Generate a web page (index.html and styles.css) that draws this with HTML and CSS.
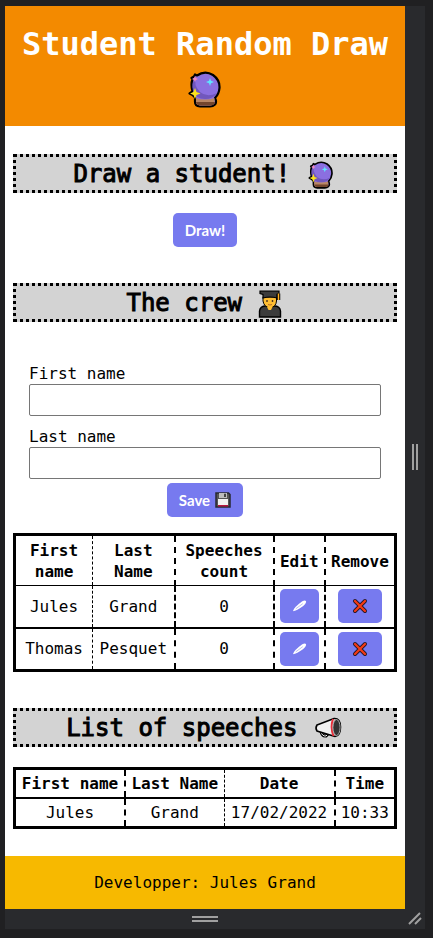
FILE: index.html
```html
<!DOCTYPE html>
<html lang="en">
<head>
<meta charset="utf-8">
<meta name="viewport" content="width=device-width, initial-scale=1">
<title>Student Random Draw</title>
<link rel="stylesheet" href="styles.css">
</head>
<body>
<svg class="sprite" aria-hidden="true">
  <symbol id="ball" viewBox="0 0 34 37">
    <path d="M7 26.500 L4.500 24 1.500 22.500 4.500 20.500 Q2.500 13 4.500 8.500 L3.500 7 6 5.500 7 3.500 9 4.500 Q17 -1 25 4 Q32 9 31.500 17 Q31 23 27 27 Q29 31 27 33.500 Q25 35.500 22 35.500 H12 Q7 35 7 31 Z" fill="#8b6fe0" stroke="#000" stroke-width="2.200" stroke-linejoin="round"/>
    <path d="M8 5 Q3 12 5 20 Q8 28 17 28 Q25 28 29 22 Q19 27 12 21 Q5 14 8 5Z" fill="#7157bd"/>
    <path d="M8 27 Q17 30 26.500 27 V32 Q25 34.500 22 34.500 H12 Q8 34 8 31Z" fill="#b98764"/>
    <path d="M8 31 H27 Q26.500 34.500 22 34.500 H12 Q8 34 8 31Z" fill="#74462d"/>
    <path d="M7 17 L8.500 21 12.500 22.500 8.500 24 7 28 5.500 24 2 22.500 5.500 21Z" fill="#fde31b"/>
    <path d="M22 7 L23 9.800 26 11 23 12.200 22 15 21 12.200 18 11 21 9.800Z" fill="#61e4ff"/>
    <path d="M7 5 L7.800 7 10 8 7.800 9 7 11 6 9 4 8 6 7Z" fill="#ef8ac1"/>
  </symbol>
  <symbol id="student" viewBox="0 0 24 28">
    <path d="M1.500 27 V21 Q2 16 8 16 H16 Q22 16 22.500 21 V27Z" fill="#3b3b3b" stroke="#000" stroke-width="1.400"/>
    <path d="M5 7 H18.500 V11 Q18 17 12 18 Q6 17 5 11Z" fill="#ffbe32" stroke="#000" stroke-width="1"/>
    <path d="M9 17 H14.500 L13 20 H10.500Z" fill="#ffbe32"/>
    <path d="M2 1.200 H21 V3.500 L19 4.500 V8 Q12 6 5 8 V4.500 L2 3.500Z" fill="#3b3b3b" stroke="#000" stroke-width="1.200"/>
    <path d="M20.500 3.500 V10" stroke="#000" stroke-width="3.500"/>
    <path d="M20.500 3.500 V10" stroke="#ffae1f" stroke-width="1.500"/>
    <path d="M9 10 V12 M14.500 10 V12" stroke="#4e351f" stroke-width="1.400"/>
    <path d="M10 14.500 Q12 15.500 14 14.500" fill="none" stroke="#b66b24"/>
  </symbol>
  <symbol id="megaphone" viewBox="0 0 28 22">
    <path d="M7 14.500 Q8 19.500 12 19 L14 17" fill="none" stroke="#000" stroke-width="3"/>
    <path d="M7 14.500 Q8 19.500 12 19 L14 17" fill="none" stroke="#eee" stroke-width="1"/>
    <path d="M3 8 L20 1.500 Q26.500 1 26.500 10 Q26.500 19 21 19.500 L3 14 Q1 11 3 8Z" fill="#f0f0f0" stroke="#000" stroke-width="1.600"/>
    <path d="M19 2 Q16 10 19.500 19" fill="none" stroke="#e8303b" stroke-width="2"/>
    <ellipse cx="22.500" cy="10.500" rx="3.600" ry="8" fill="#343434" stroke="#aaa" stroke-width="1"/>
  </symbol>
  <symbol id="floppy" viewBox="0 0 16 16">
    <path d="M1 1 H13.500 L15 2.500 V15 H1Z" fill="#555" stroke="#282832" stroke-width="1.500"/>
    <path d="M4 1 H12 V6 H4Z" fill="#bdbdbd"/>
    <path d="M9 1.800 H11 V5 H9Z" fill="#444"/>
    <path d="M3 7 H13 V13 H3Z" fill="#f2f2f2"/>
    <path d="M3 13 H13 V14.500 H3Z" fill="#b81540"/>
  </symbol>
  <symbol id="pencil" viewBox="0 0 16 14">
    <path d="M1 12.500 Q2 8.500 11 2 Q14 .500 15 2 Q15.500 4 12 7 Q5 12 1 12.500Z" fill="#fff"/>
    <path d="M4 10 L11.500 4.500" stroke="#b9bbf0" stroke-width="1"/>
  </symbol>
  <symbol id="cross" viewBox="0 0 16 16">
    <path d="M3 3 L13 13 M13 3 L3 13" stroke="#26182a" stroke-width="4" stroke-linecap="round"/>
    <path d="M3 3 L13 13 M13 3 L3 13" stroke="#f53b14" stroke-width="2.200" stroke-linecap="round"/>
  </symbol>
</svg>
<div class="device">
  <div class="page">
    <header class="banner">
      <h1>Student Random Draw <svg class="emoji-large" role="img" aria-label="crystal ball"><use href="#ball"/></svg></h1>
    </header>
    <main>
      <section>
        <h2>Draw a student! <span class="emoji"><svg class="ball" aria-hidden="true"><use href="#ball"/></svg></span></h2>
        <div class="action"><button type="button">Draw!</button></div>
      </section>
      <section>
        <h2>The crew <span class="emoji narrow"><svg class="student" aria-hidden="true"><use href="#student"/></svg></span></h2>
        <form>
          <label for="first-name">First name</label>
          <input id="first-name" type="text">
          <label for="last-name">Last name</label>
          <input id="last-name" type="text">
          <button type="button">Save<svg class="floppy" aria-hidden="true"><use href="#floppy"/></svg></button>
        </form>
        <table class="crew">
          <colgroup><col class="c-first"><col class="c-last"><col class="c-count"><col class="c-edit"><col class="c-remove"></colgroup>
          <thead>
            <tr><th class="thin">First name</th><th>Last Name</th><th>Speeches count</th><th>Edit</th><th>Remove</th></tr>
          </thead>
          <tbody>
            <tr>
              <td class="thin">Jules</td><td>Grand</td><td>0</td>
              <td><button type="button" aria-label="Edit Jules"><svg class="pencil"><use href="#pencil"/></svg></button></td>
              <td><button type="button" aria-label="Remove Jules"><svg class="cross"><use href="#cross"/></svg></button></td>
            </tr>
            <tr>
              <td class="thin">Thomas</td><td>Pesquet</td><td>0</td>
              <td><button type="button" aria-label="Edit Thomas"><svg class="pencil"><use href="#pencil"/></svg></button></td>
              <td><button type="button" aria-label="Remove Thomas"><svg class="cross"><use href="#cross"/></svg></button></td>
            </tr>
          </tbody>
        </table>
      </section>
      <section>
        <h2>List of speeches <span class="emoji"><svg class="megaphone" aria-hidden="true"><use href="#megaphone"/></svg></span></h2>
        <table class="speeches">
          <colgroup><col class="s-first"><col class="s-last"><col class="s-date"><col class="s-time"></colgroup>
          <thead>
            <tr><th>First name</th><th class="thin">Last Name</th><th>Date</th><th>Time</th></tr>
          </thead>
          <tbody>
            <tr><td>Jules</td><td class="thin">Grand</td><td>17/02/2022</td><td>10:33</td></tr>
          </tbody>
        </table>
      </section>
    </main>
    <footer>Developper: Jules Grand</footer>
  </div>
  <div class="grip side"><svg width="6" height="26"><path d="M1 0V26M5 0V26"/></svg></div>
  <div class="grip bottom"><svg width="26" height="6"><path d="M0 1H26M0 5H26"/></svg></div>
  <div class="grip corner"><svg width="14" height="14"><path d="M1 12L12 1M7 12L13 6"/></svg></div>
</div>
</body>
</html>
```
FILE: styles.css
```css
* { box-sizing: border-box; }

body {
  margin: 0;
  padding: 6px 8px 9px 5px;
  background: #202022;
  color: #000;
  font: 16px/21px "DejaVu Sans Mono", monospace;
}

.sprite { position: absolute; width: 0; height: 0; }

.device {
  display: grid;
  grid-template-columns: 1fr 20px;
  grid-template-rows: auto 20px;
  background: #292a2d;
}

.page { background: #fff; text-align: center; }

.banner { padding: 16px 8px; background: #f38a00; color: #fff; }

h1 { margin: 0; font-size: 32px; line-height: 44px; }

.emoji-large { width: 34px; height: 37px; vertical-align: -9px; }

main { padding: 28px 8px 27px; }

section + section { margin-top: 36px; }

h2 {
  display: flex;
  justify-content: center;
  align-items: center;
  margin: 0 0 20px;
  padding-top: 2px;
  border: 3px dotted #000;
  background: #d3d3d3;
  font-size: 24px;
  font-weight: 400;
  line-height: 31px;
  white-space: pre;
  -webkit-text-stroke: 1px #000;
}

.emoji { display: flex; justify-content: center; width: 32px; }
.narrow { width: 27px; }
.ball { width: 26px; height: 28px; }
.student { width: 24px; height: 28px; }
.megaphone { width: 28px; height: 22px; }

.action { display: flex; justify-content: center; }

button {
  display: inline-flex;
  align-items: center;
  justify-content: center;
  gap: 5px;
  height: 34px;
  padding: 0 12px;
  border: 0;
  border-radius: 5px;
  background: #777aef;
  color: #fff;
  font: 700 15px/20px Lato, sans-serif;
}

.floppy { width: 16px; height: 16px; }
.pencil { width: 15px; height: 14px; }
.cross { width: 16px; height: 16px; margin: 0 2px; }

form { display: flex; flex-direction: column; padding: 21px 16px 0; }

label { text-align: left; }

input {
  width: 100%;
  height: 32px;
  margin-bottom: 10px;
  padding: 4px;
  border: 1px solid #767676;
  border-radius: 2px;
  background: #fff;
  font: inherit;
}

form button { align-self: center; }

#last-name { margin-bottom: 4px; }

table {
  width: 100%;
  border: 3px solid #000;
  border-collapse: collapse;
  table-layout: fixed;
}

th, td { padding: 3px 2px; border-right: 2px dashed #000; }
th:last-child, td:last-child { border-right: 0; }
.thin { border-right-width: 1px; }
tr { border-bottom: 2px solid #000; }

.crew { margin-top: 16px; }
.crew thead tr { border-bottom-width: 1px; }
.crew td { height: 42px; }
.crew button { vertical-align: middle; }
.crew td, .crew th { padding: 3px 0; }
.crew th { padding-top: 4px; }

.c-first { width: 20.5%; }
.c-last { width: 21.5%; }
.c-count { width: 26%; }
.c-edit { width: 13.5%; }
.c-remove { width: 18.5%; }
.s-first { width: 29%; }
.s-last { width: 26%; }
.s-date { width: 29%; }
.s-time { width: 16%; }

footer { padding: 16px; background: #f7b900; }

.grip { display: flex; align-items: center; justify-content: center; }
.grip path { fill: none; stroke: #a0a0a0; stroke-width: 2; }
```
